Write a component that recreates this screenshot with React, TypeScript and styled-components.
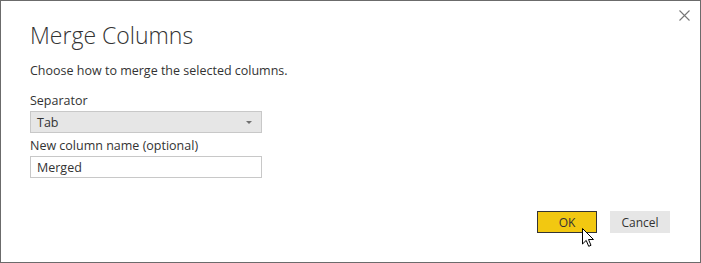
import styled, { createGlobalStyle } from 'styled-components';

const GlobalStyle = createGlobalStyle`
    html, body {
        margin: 0;
        padding: 0;
        background: #ffffff;
    }
    * {
        box-sizing: border-box;
    }
`;

const Dialog = styled.div`
    position: relative;
    width: 701px;
    height: 263px;
    border: 1px solid #6b6b6b;
    background: #ffffff;
    padding: 19px 30px 0 29px;
    display: flex;
    flex-direction: column;
    font-family: 'Open Sans', 'Noto Sans', sans-serif;
    color: #333333;
`;

const CloseButton = styled.button`
    position: absolute;
    top: 8px;
    right: 10px;
    width: 12px;
    height: 12px;
    padding: 0;
    border: none;
    background: transparent;
    display: flex;
    align-items: center;
    justify-content: center;
`;

const Title = styled.h2`
    margin: 0;
    font-size: 23px;
    line-height: 30px;
    font-weight: 300;
    color: #333333;
`;

const Intro = styled.p`
    margin: 13px 0 0;
    font-size: 12.5px;
    line-height: 16px;
`;

const Field = styled.div<{ gap: number }>`
    display: flex;
    flex-direction: column;
    margin-top: ${({ gap }) => gap}px;
    width: 232px;
`;

const Label = styled.label`
    font-size: 12.5px;
    line-height: 16px;
    margin-bottom: 2px;
`;

const Select = styled.div`
    height: 22px;
    border: 1px solid #c8c8c8;
    background: #e6e6e6;
    display: flex;
    align-items: center;
    justify-content: space-between;
    padding: 0 9px 0 6px;
    font-size: 12.5px;
`;

const Caret = styled.span`
    width: 0;
    height: 0;
    border-left: 3px solid transparent;
    border-right: 3px solid transparent;
    border-top: 3px solid #707070;
`;

const Input = styled.div`
    height: 22px;
    border: 1px solid #c8c8c8;
    background: #ffffff;
    display: flex;
    align-items: center;
    padding: 0 6px;
    font-size: 12.5px;
`;

const Footer = styled.div`
    margin-top: auto;
    margin-bottom: 29px;
    display: flex;
    justify-content: flex-end;
    gap: 13px;
`;

const Button = styled.button<{ primary?: boolean }>`
    position: relative;
    width: 60px;
    height: 22px;
    padding: 0;
    font-family: 'Open Sans', 'Noto Sans', sans-serif;
    font-size: 12px;
    color: #333333;
    border: 1px solid ${({ primary }) => (primary ? '#333333' : '#e6e6e6')};
    background: ${({ primary }) => (primary ? '#f2c811' : '#e6e6e6')};
`;

const Pointer = styled.svg`
    position: absolute;
    left: 44px;
    top: 16px;
`;

const App = () => {
    return (
        <>
            <GlobalStyle />
            <Dialog>
                <CloseButton aria-label="Close">
                    <svg width="11" height="11" viewBox="0 0 11 11">
                        <path d="M0.5 0.5 L10.5 10.5 M10.5 0.5 L0.5 10.5" stroke="#767676" strokeWidth="1.1" />
                    </svg>
                </CloseButton>
                <Title>Merge Columns</Title>
                <Intro>Choose how to merge the selected columns.</Intro>
                <Field gap={14}>
                    <Label>Separator</Label>
                    <Select>
                        <span>Tab</span>
                        <Caret />
                    </Select>
                </Field>
                <Field gap={5}>
                    <Label>New column name (optional)</Label>
                    <Input>Merged</Input>
                </Field>
                <Footer>
                    <Button primary>
                        OK
                        <Pointer width="13" height="20" viewBox="0 0 13 20">
                            <path
                                d="M0.5 0.5 L0.5 16 L4.2 12.4 L6.7 18.3 L9 17.3 L6.5 11.5 L11.5 11.5 Z"
                                fill="#ffffff"
                                stroke="#000000"
                                strokeWidth="1"
                                strokeLinejoin="round"
                            />
                        </Pointer>
                    </Button>
                    <Button>Cancel</Button>
                </Footer>
            </Dialog>
        </>
    );
};

export default App;
